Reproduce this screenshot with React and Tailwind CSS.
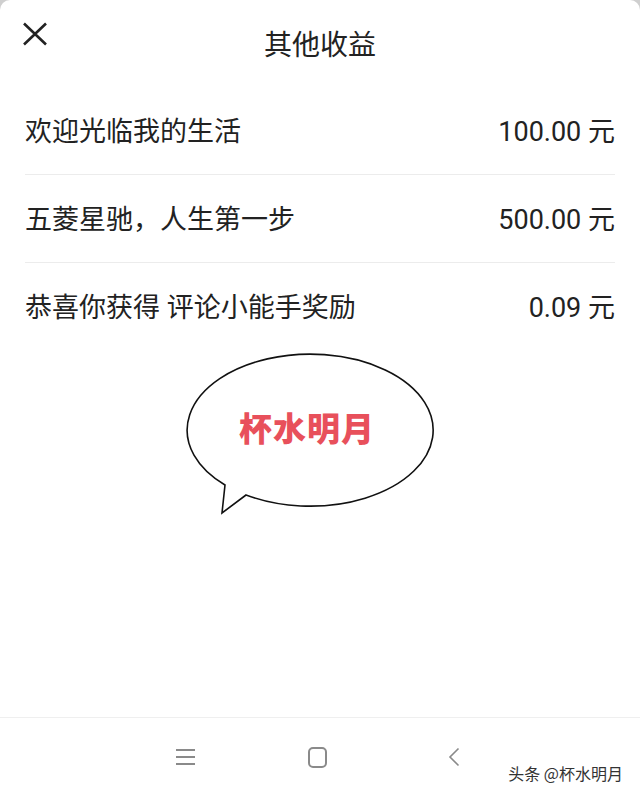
import React from 'react';

const rows = [
  { title: '欢迎光临我的生活', amount: '100.00' },
  { title: '五菱星驰，人生第一步', amount: '500.00' },
  { title: '恭喜你获得 评论小能手奖励', amount: '0.09' },
];

function SpeechBubble() {
  // ellipse centre (130, 77), rx 123, ry 76; tail leaves at A and B
  return (
    <div className="relative ml-[180px] mt-[2px] h-[164px] w-[262px]">
      <svg width="262" height="164" viewBox="0 0 262 164" className="block">
        <path
          d="M45 132 A123 76 0 1 1 66 142 L42 160 Z"
          fill="#fff"
          stroke="#111"
          strokeWidth="1.6"
          strokeLinejoin="miter"
        />
      </svg>
      <div className="absolute left-0 top-[54px] flex w-[254px] justify-center">
        <span className="text-[33px] leading-[40px] font-black tracking-[1px] text-[#e8505b] [font-family:'Noto_Sans_CJK_SC',sans-serif]">
          杯水明月
        </span>
      </div>
    </div>
  );
}

export default function App() {
  return (
    <div className="h-[795px] w-[640px] bg-[#cfcfcf] [font-family:Roboto,'Noto_Sans_CJK_SC',sans-serif]">
      <div className="relative flex h-full flex-col rounded-t-[10px] bg-white">
        {/* Header */}
        <div className="relative flex h-[87px] items-start justify-center pt-[26px]">
          <button className="absolute left-[22px] top-[22px]">
            <svg width="26" height="24" viewBox="0 0 26 24">
              <path d="M2 1.5 L24 22.5 M24 1.5 L2 22.5" stroke="#222" strokeWidth="2.6" strokeLinecap="butt" />
            </svg>
          </button>
          <h1 className="text-[28px] leading-[40px] text-[#222]">其他收益</h1>
        </div>

        {/* Earnings list */}
        <div className="mx-[25px]">
          {rows.map((row, i) => (
            <div
              key={i}
              className={`flex h-[88px] items-center justify-between pt-[2px] ${i < rows.length - 1 ? 'border-b border-[#ececec]' : ''}`}
            >
              <span className="text-[27px] leading-[36px] text-[#222]">{row.title}</span>
              <span className="text-[27px] leading-[36px] text-[#222]">
                {row.amount} 元
              </span>
            </div>
          ))}
        </div>

        <SpeechBubble />

        <div className="flex-1" />

        {/* System nav bar */}
        <div className="relative h-[78px] border-t border-[#efefef]">
          <div className="flex h-[76px] items-center pt-[2px]">
            <div className="ml-[176px] flex flex-col gap-[5px]">
              <div className="h-[2px] w-[19px] bg-[#8a8a8a]" />
              <div className="h-[2px] w-[19px] bg-[#8a8a8a]" />
              <div className="h-[2px] w-[19px] bg-[#8a8a8a]" />
            </div>
            <div className="ml-[113px] h-[21px] w-[19px] rounded-[5px] border-2 border-[#8a8a8a]" />
            <svg className="ml-[121px]" width="12" height="20" viewBox="0 0 12 20">
              <path d="M10.5 1.5 L2 10 L10.5 18.5" fill="none" stroke="#8a8a8a" strokeWidth="1.6" />
            </svg>
          </div>
          <div className="absolute right-[17px] top-[45px] text-[16px] leading-[20px] text-[#333] [font-family:'Noto_Sans_CJK_SC',sans-serif] [text-shadow:0_0_2px_#fff]">
            头条 @杯水明月
          </div>
        </div>
      </div>
    </div>
  );
}
